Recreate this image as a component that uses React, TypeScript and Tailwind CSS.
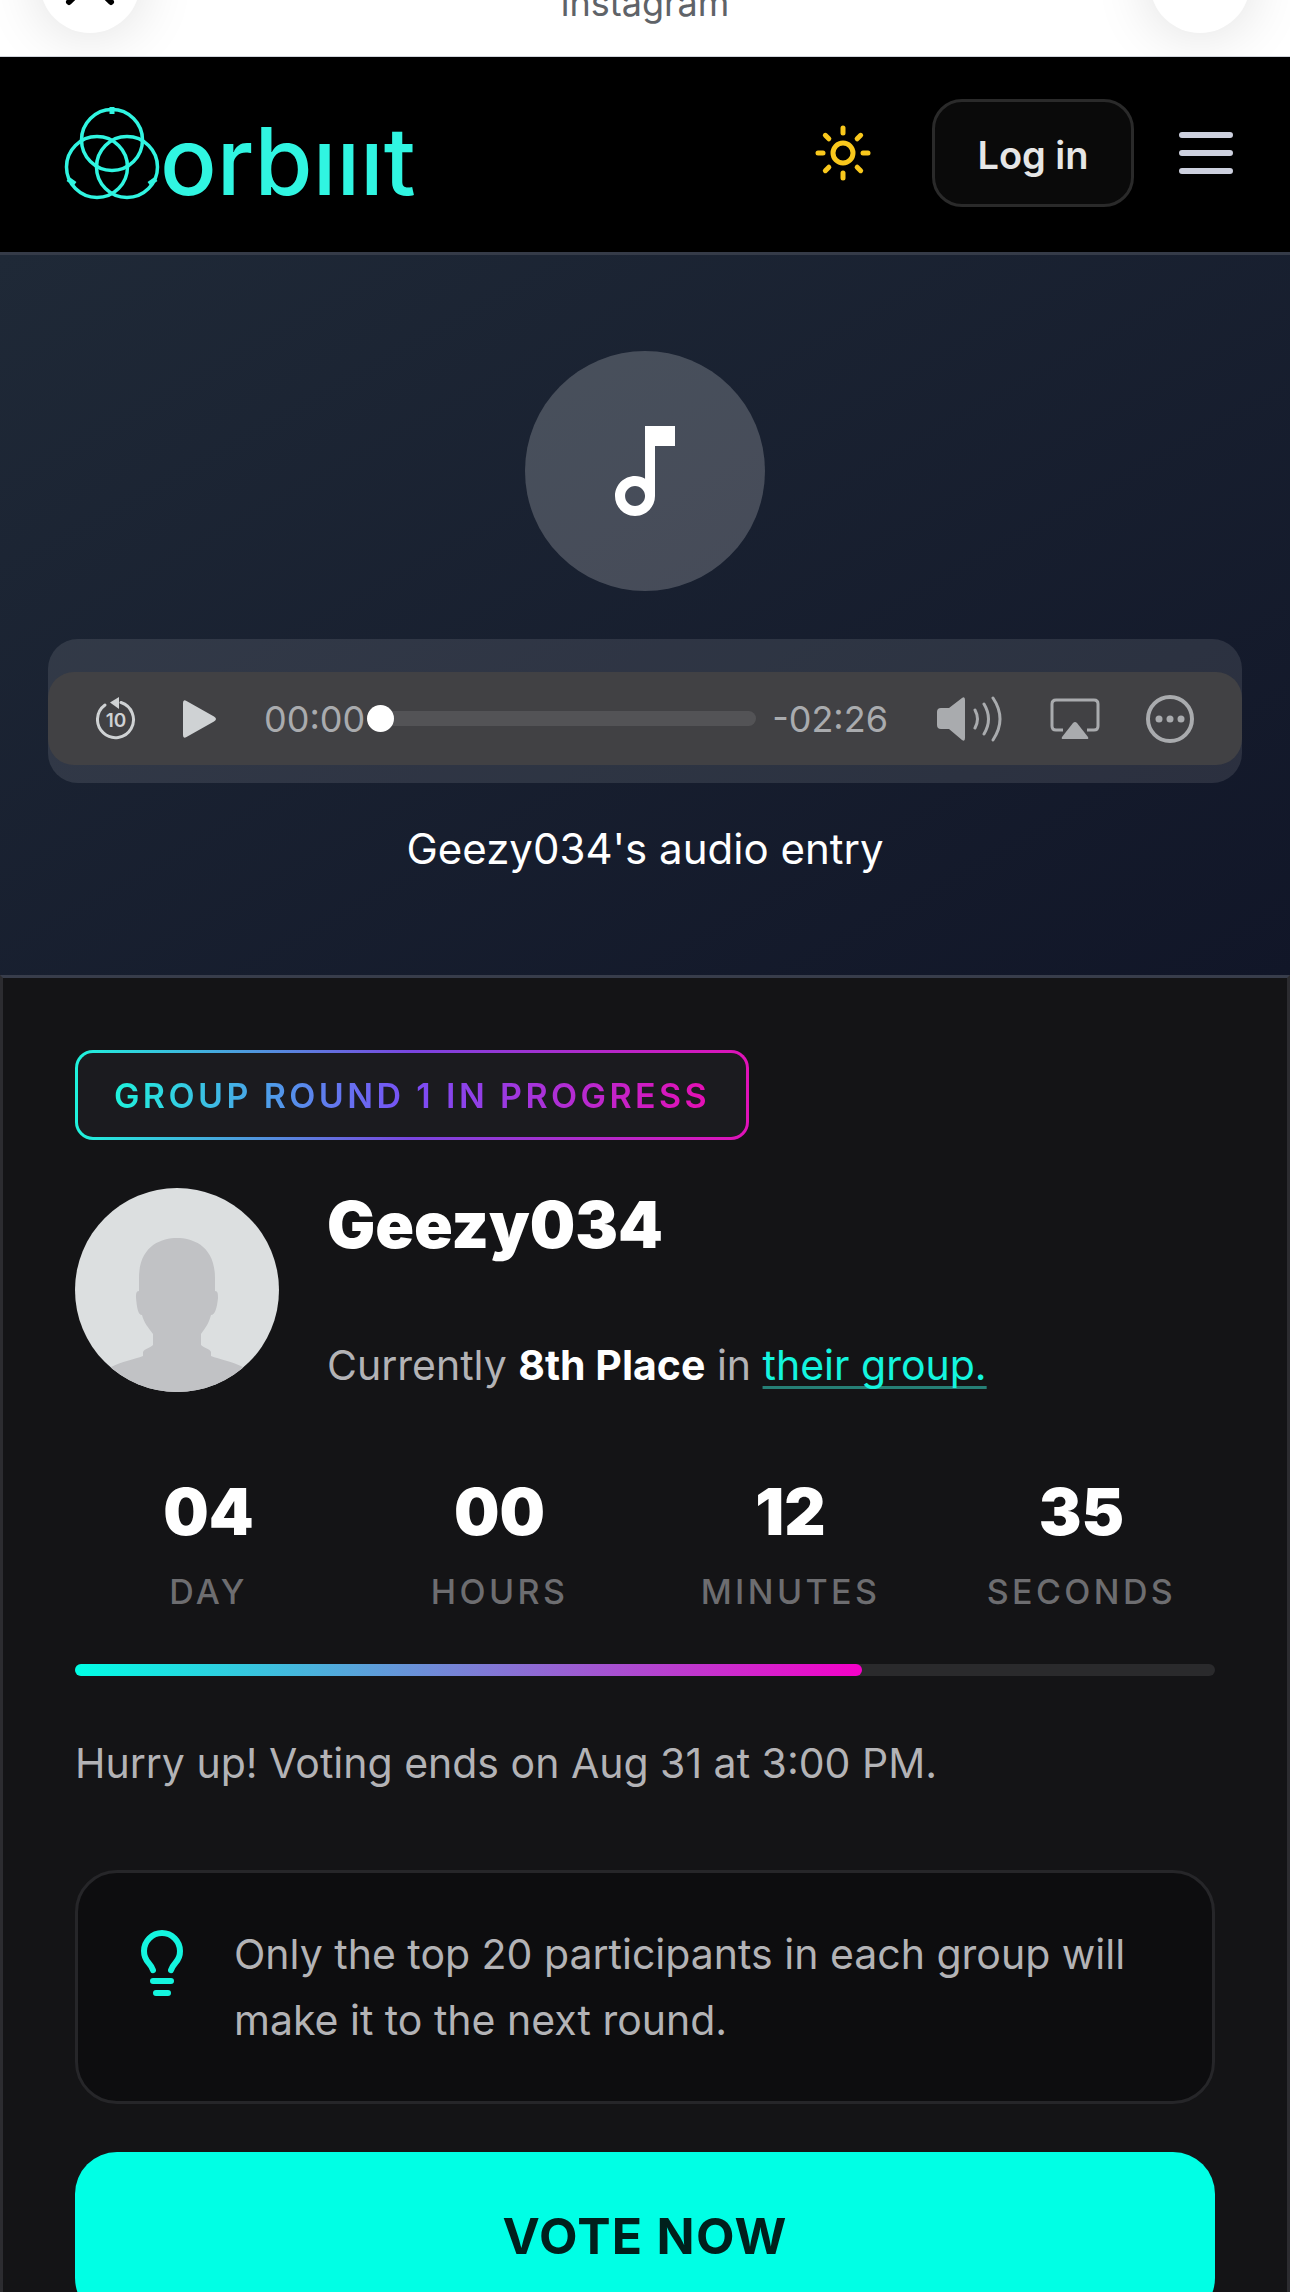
import React from 'react'
import { Sun } from 'lucide-react'

const countdown = [
    { value: '04', label: 'DAY' },
    { value: '00', label: 'HOURS' },
    { value: '12', label: 'MINUTES' },
    { value: '35', label: 'SECONDS' },
]

function BrowserBar() {
    return (
        <div className="h-[57px] overflow-hidden bg-white border-b border-gray-300 flex items-end justify-between px-10 pb-[23px] text-black">
            <button aria-label="Close" className="shrink-0 size-[100px] rounded-full bg-white shadow-[0_0_60px_rgba(0,0,0,0.14)] flex items-center justify-center">
                <svg width="52" height="52" viewBox="0 0 52 52" fill="none" stroke="currentColor" strokeWidth="6" strokeLinecap="round">
                    <path d="M5 3l42 42M47 3L5 45" />
                </svg>
            </button>
            <span className="text-[36px] leading-[60px] text-[#5f6368]">instagram</span>
            <button aria-label="More" className="shrink-0 size-[100px] rounded-full bg-white shadow-[0_0_60px_rgba(0,0,0,0.14)]"></button>
        </div>
    )
}

function Logo() {
    return (
        <a href="#" aria-label="orbiiit" className="flex items-center text-[#30f5e1]">
            <svg width="96" height="94" viewBox="0 0 96 94" fill="none" stroke="currentColor" strokeWidth="3.500">
                <circle cx="48" cy="34" r="30.500" />
                <circle cx="33" cy="61" r="30.500" />
                <circle cx="63" cy="61" r="30.500" />
                <path d="M48 1v7M4 73l7 5M92 73l-7 5" strokeWidth="5" />
            </svg>
            <span className="pt-4 text-[94px] leading-[94px] font-medium">orbıııt</span>
        </a>
    )
}

function Header() {
    return (
        <header className="bg-black border-b-[3px] border-[#353b48] px-12 h-[198px] pb-[3px] flex items-center">
            <div className="pl-4">
                <Logo />
            </div>
            <div className="ml-auto flex items-center">
                <button aria-label="Toggle theme" className="mr-[59px] text-[#f9c81c]">
                    <Sun size={60} />
                </button>
                <button className="w-[202px] h-[108px] rounded-[30px] border-[3px] border-[#2a2a2a] bg-[#0a0a0a] pt-1 text-[38px] font-semibold text-[#e6e6e6] mr-9">
                    Log in
                </button>
                <button aria-label="Menu" className="text-[#cdd0de]">
                    <svg width="72" height="72" viewBox="0 0 24 24" stroke="currentColor" strokeWidth="2" strokeLinecap="round">
                        <path d="M4 6h16M4 12h16M4 18h16" />
                    </svg>
                </button>
            </div>
        </header>
    )
}

function Player() {
    return (
        <div className="w-full rounded-[30px] bg-white/10 pt-[33px] pb-[18px]">
            <div className="h-[93px] rounded-[26px] bg-[#414144] flex items-center px-12 text-[#a9abae]">
                <button aria-label="Back 10 seconds" className="text-[#cfd2d4]">
                    <svg width="40" height="44" viewBox="0 0 40 44" fill="none" stroke="currentColor" strokeWidth="3" strokeLinecap="round">
                        <path d="M9 8A18 18 0 1 0 25 5.500" />
                        <path d="M14 5.500L23 0v12z" fill="currentColor" stroke="none" />
                        <text x="20" y="30" textAnchor="middle" fontSize="19" fontWeight="600" fill="currentColor" stroke="none">10</text>
                    </svg>
                </button>
                <button aria-label="Play" className="ml-11 text-[#cfd2d4]">
                    <svg width="38" height="40" viewBox="0 0 38 40" fill="currentColor">
                        <path d="M3 4Q3 0 6.500 2L34 17.500Q38 20 34 22.500L6.500 38Q3 40 3 36z" />
                    </svg>
                </button>
                <span className="ml-[46px] text-[36px]">00:00</span>
                <div className="flex-1 flex items-center ml-0.5">
                    <span className="relative z-10 size-[27px] rounded-full bg-white" />
                    <span className="flex-1 -ml-2 h-[15px] rounded-r-lg bg-[#535356]" />
                </div>
                <span className="ml-4 text-[36px]">-02:26</span>
                <button aria-label="Volume" className="ml-12">
                    <svg width="68" height="46" viewBox="0 0 68 46" fill="none" stroke="currentColor" strokeWidth="3" strokeLinecap="round">
                        <path d="M1 16q0-4 4-4h8L26 2q3-2 3 2v38q0 4-3 2L13 33H5q-4 0-4-4z" fill="currentColor" stroke="none" />
                        <path d="M39 14q5 9 0 18M48 8q9 15 0 30M57 2q14 21 0 42" />
                    </svg>
                </button>
                <button aria-label="AirPlay" className="ml-[46px]">
                    <svg width="50" height="42" viewBox="0 0 50 42" fill="none" stroke="currentColor" strokeWidth="3">
                        <path d="M13 32H6q-4 0-4-4V6q0-4 4-4h38q4 0 4 4v22q0 4-4 4h-7" />
                        <path d="M25 24q1 0 2 1l11 14q1 2-1 2H13q-2 0-1-2l11-14q1-1 2-1z" fill="currentColor" stroke="none" />
                    </svg>
                </button>
                <button aria-label="More options" className="ml-[46px]">
                    <svg width="48" height="48" viewBox="0 0 48 48" fill="none" stroke="currentColor" strokeWidth="4">
                        <circle cx="24" cy="24" r="22" />
                        <g fill="currentColor" stroke="none">
                            <circle cx="13" cy="24" r="3.500" />
                            <circle cx="24" cy="24" r="3.500" />
                            <circle cx="35" cy="24" r="3.500" />
                        </g>
                    </svg>
                </button>
            </div>
        </div>
    )
}

function AudioEntry() {
    return (
        <section className="bg-linear-to-br/srgb from-[#1f2937] to-[#111628] px-12 py-24 flex flex-col items-center">
            <div className="size-60 rounded-full bg-white/20 flex items-center justify-center text-white mb-12">
                <svg width="120" height="120" viewBox="0 0 24 24" fill="currentColor">
                    <path d="M12 3l.01 10.550c-.59-.34-1.270-.55-2-.55C7.790 13 6 14.790 6 17s1.790 4 4.010 4S14 19.210 14 17V7h4V3h-6zm-1.990 16c-1.100 0-2-.9-2-2s.9-2 2-2 2 .9 2 2-.9 2-2 2z" />
                </svg>
            </div>
            <Player />
            <p className="mt-9 text-[42px] leading-[60px] text-white">Geezy034's audio entry</p>
        </section>
    )
}

function Avatar() {
    return (
        <svg width="204" height="204" viewBox="0 0 204 204" className="rounded-full bg-[#dcdfe0] shrink-0">
            <path
                fill="#c1c2c5"
                d="M102 50C86 50 64 58 64 90v13c-3 0-3 3-3 7 1 10 2 17 6 17 2 8 6 12 11 19v11c-3 3-9 4-10 7v4c-8 3-22 6-32 11v25h132v-25c-10-5-24-8-32-11v-4c-1-3-7-4-10-7v-11c5-7 8-11 10-19 4 0 6-7 7-17 0-4 0-7-3-7V90c0-32-22-40-38-40z"
            />
        </svg>
    )
}

export default function App() {
    return (
        <div className="h-screen overflow-hidden bg-black font-['Inter',sans-serif]">
            <BrowserBar />
            <Header />
            <AudioEntry />
            <main className="border-[3px] border-[#2c2c30] border-t-[#383d4b] bg-[#141416] px-18 py-18">
                <div className="w-fit rounded-[18px] bg-linear-to-r/srgb from-[#1ff3dc] via-[#7a45e0] to-[#e012b8] p-[3px]">
                    <div className="rounded-[15px] bg-[#1b1b1f] px-9 h-[84px] flex items-center">
                        <span className="text-[34px] font-semibold tracking-widest bg-linear-to-r/srgb from-[#1ff3dc] via-[#7a4df5] to-[#e60fb4] bg-clip-text text-transparent">
                            GROUP ROUND 1 IN PROGRESS
                        </span>
                    </div>
                </div>

                <div className="mt-12 flex gap-12">
                    <Avatar />
                    <div className="flex flex-col justify-between">
                        <h1 className="text-[64px] leading-[74px] font-black text-white">Geezy034</h1>
                        <p className="text-[41px] leading-[54px] text-[#b3b3b6]">
                            Currently <strong className="font-bold text-white">8th Place</strong> in{' '}
                            <a href="#" className="text-[#14f5df] underline decoration-[3px] decoration-[#267f76] underline-offset-[6px] [text-decoration-skip-ink:none]">their group.</a>
                        </p>
                    </div>
                </div>

                <div className="mt-21 -mx-3 grid grid-cols-4 text-center">
                    {countdown.map((item) => (
                        <div key={item.label}>
                            <div className="text-[64px] leading-[72px] font-black text-white">{item.value}</div>
                            <div className="mt-5 text-[34px] leading-[48px] font-medium tracking-widest text-[#6d6d70]">{item.label}</div>
                        </div>
                    ))}
                </div>

                <div className="mt-12 h-3 rounded-full bg-[#2a2a2c]">
                    <div className="h-3 w-[69%] rounded-full bg-linear-to-r/srgb from-[#00ffe5] to-[#f500c8]" />
                </div>

                <p className="mt-14 text-[41px] leading-[62px] text-[#b3b3b6]">Hurry up! Voting ends on Aug 31 at 3:00 PM.</p>

                <div className="mt-19 rounded-[42px] border-[3px] border-[#262629] bg-[#0d0d0f] p-12 flex gap-9">
                    <svg width="72" height="72" viewBox="0 0 24 24" fill="none" stroke="#14f5df" strokeWidth="2" strokeLinecap="round" strokeLinejoin="round" className="shrink-0 mt-1.5">
                        <path d="M9 18h6M10 22h4M15 14.400c.3-1 .8-1.700 1.500-2.500A5.650 5.650 0 0 0 18 8 6 6 0 0 0 6 8c0 1.300.5 2.800 1.500 3.900.7.8 1.200 1.500 1.500 2.500" />
                    </svg>
                    <p className="text-[41px] leading-[66px] text-[#b3b3b6]">
                        Only the top 20 participants in each group will make it to the next round.
                    </p>
                </div>

                <button className="mt-12 w-full h-42 rounded-[42px] bg-[#00ffe5] text-[50px] font-bold tracking-wide text-[#00201c]">
                    VOTE NOW
                </button>
            </main>
        </div>
    )
}
